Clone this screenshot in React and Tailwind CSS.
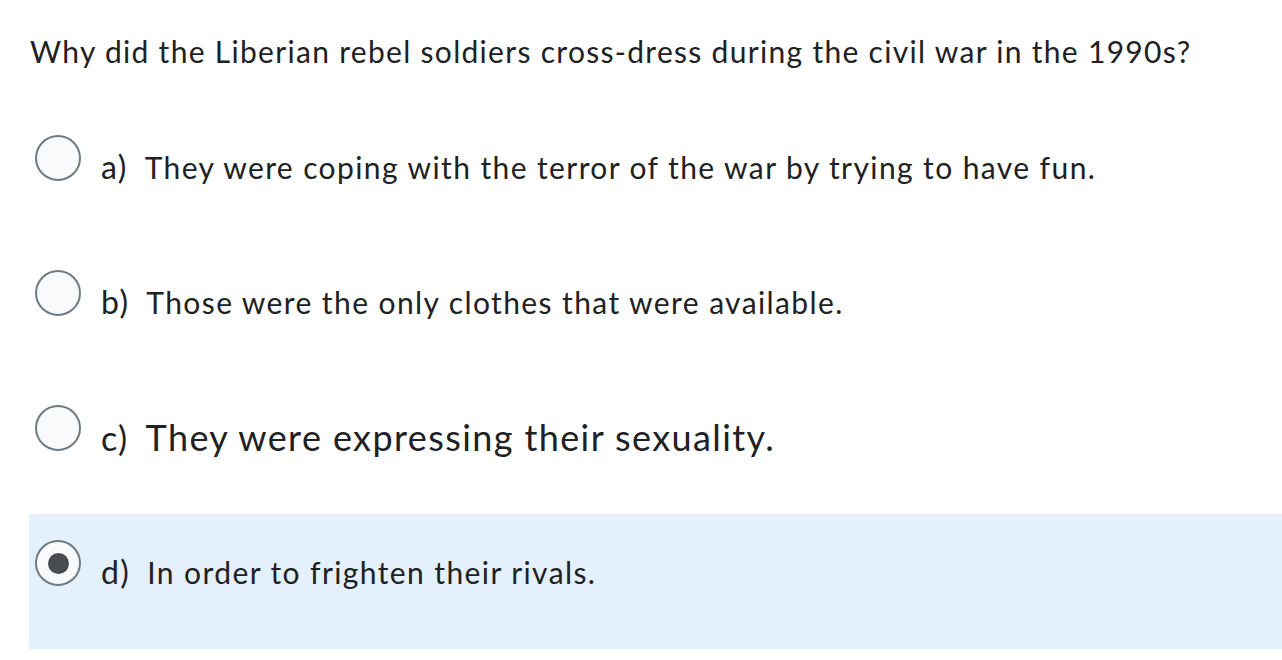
import React from 'react'

const options = [
  { id: 'a', label: 'a)', text: 'They were coping with the terror of the war by trying to have fun.', labelSize: 'text-[32px]', textSize: 'text-[30px]' },
  { id: 'b', label: 'b)', text: 'Those were the only clothes that were available.', labelSize: 'text-[32px]', textSize: 'text-[30px]' },
  { id: 'c', label: 'c)', text: 'They were expressing their sexuality.', labelSize: 'text-[34px]', textSize: 'text-[36px]' },
  { id: 'd', label: 'd)', text: 'In order to frighten their rivals.', labelSize: 'text-[32px]', textSize: 'text-[30px]' },
]

const Radio = ({ checked }) => (
  <span className="w-[46px] h-[46px] shrink-0 rounded-full border-2 border-[#6f7b83] bg-[#f9fafc] flex items-center justify-center">
    {checked && <span className="w-[21px] h-[21px] rounded-full bg-[#494c4e]" />}
  </span>
)

const App = () => {
  const selected = 'd'

  return (
    <div className="w-[1282px] h-[660px] bg-white text-[#202122] font-['Lato',sans-serif] tracking-[1.4px] overflow-hidden">

      {/* Question */}
      <p className="pt-[31px] pl-[30px] text-[30px] leading-[40px] tracking-[1.3px]">
        Why did the Liberian rebel soldiers cross-dress during the civil war in the 1990s?
      </p>

      {/* Answers */}
      <div className="mt-[38px] ml-[29px]">
        {options.map(opt => (
          <div
            key={opt.id}
            className={`h-[135px] flex items-start pl-[6px] pt-[26px] ${opt.id === selected ? 'bg-[#e4f0fc]' : ''}`}
          >
            <Radio checked={opt.id === selected} />
            <div className="flex items-baseline ml-[20px] mt-[12px] h-[40px]">
              <span className={`${opt.labelSize} leading-[40px]`}>{opt.label}</span>
              <span className={`${opt.textSize} leading-[40px] ml-[17px]`}>{opt.text}</span>
            </div>
          </div>
        ))}
      </div>

    </div>
  )
}

export default App
